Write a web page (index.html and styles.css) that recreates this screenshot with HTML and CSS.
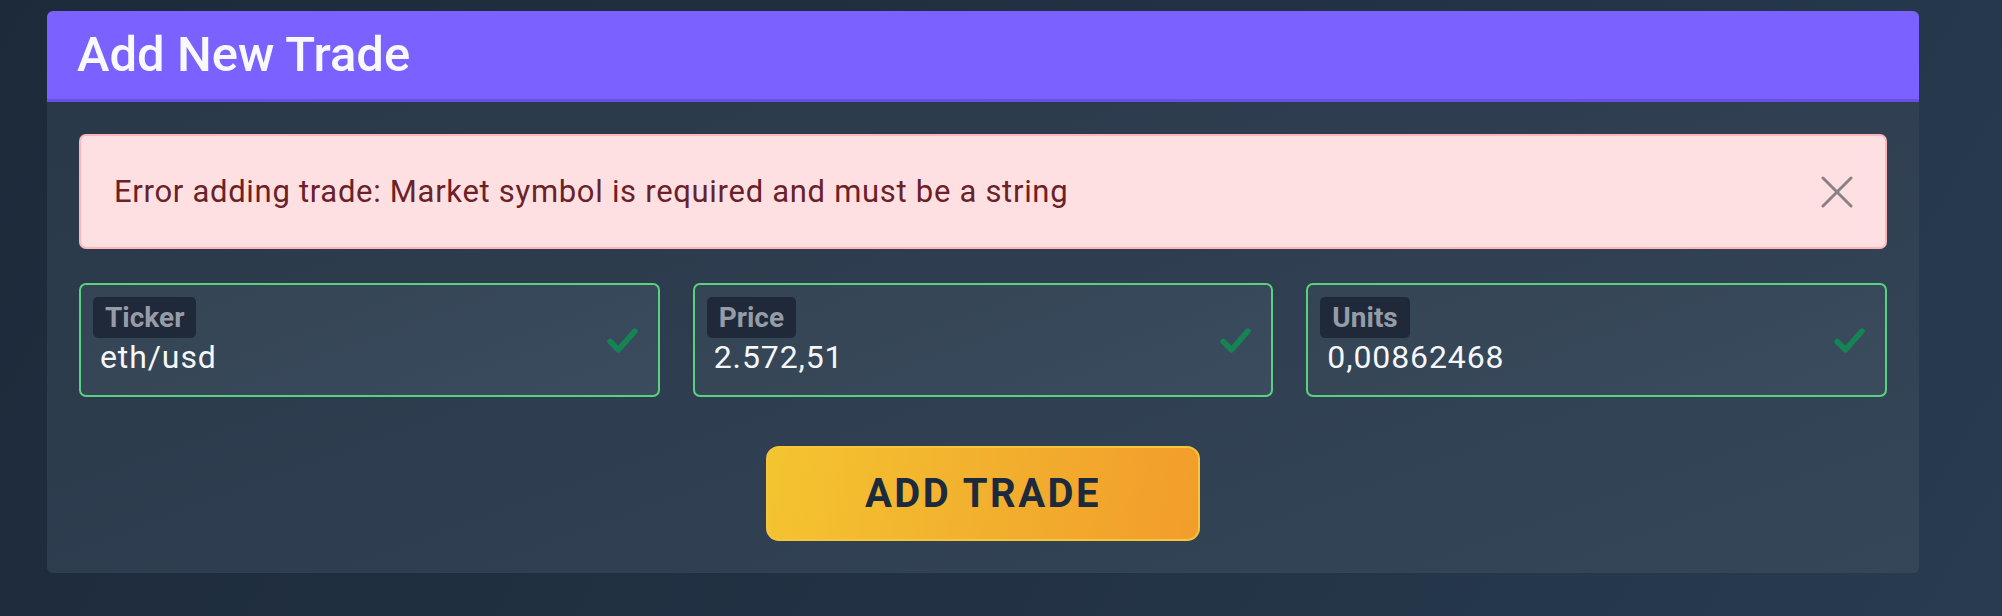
FILE: index.html
```html
<!DOCTYPE html>
<html lang="en">
<head>
<meta charset="utf-8">
<title>Add New Trade</title>
<link rel="stylesheet" href="styles.css">
</head>
<body>
<div class="page">
  <section class="card">
    <header class="card-header">
      <h2 class="card-title">Add New Trade</h2>
    </header>
    <div class="card-body">
      <div class="alert" role="alert">
        <span class="alert-text">Error adding trade: Market symbol is required and must be a string</span>
        <button class="alert-close" aria-label="Close">
          <svg viewBox="0 0 32 32" width="32" height="32"><path d="M2 2 L30 30 M30 2 L2 30" stroke="#8a8086" stroke-width="3" stroke-linecap="round" fill="none"/></svg>
        </button>
      </div>
      <div class="fields">
        <div class="field">
          <div class="field-main">
            <span class="field-label">Ticker</span>
            <span class="field-value">eth/usd</span>
          </div>
          <svg class="check" viewBox="0 0 34 34" width="35" height="35"><path d="M5 18 L13 26 L29 8" stroke="#168352" stroke-width="5.5" stroke-linecap="round" stroke-linejoin="round" fill="none"/></svg>
        </div>
        <div class="field">
          <div class="field-main">
            <span class="field-label">Price</span>
            <span class="field-value">2.572,51</span>
          </div>
          <svg class="check" viewBox="0 0 34 34" width="35" height="35"><path d="M5 18 L13 26 L29 8" stroke="#168352" stroke-width="5.5" stroke-linecap="round" stroke-linejoin="round" fill="none"/></svg>
        </div>
        <div class="field">
          <div class="field-main">
            <span class="field-label">Units</span>
            <span class="field-value">0,00862468</span>
          </div>
          <svg class="check" viewBox="0 0 34 34" width="35" height="35"><path d="M5 18 L13 26 L29 8" stroke="#168352" stroke-width="5.5" stroke-linecap="round" stroke-linejoin="round" fill="none"/></svg>
        </div>
      </div>
      <div class="actions">
        <button class="btn-add">ADD TRADE</button>
      </div>
    </div>
  </section>
</div>
</body>
</html>
```

FILE: styles.css
```css
html, body {
  margin: 0;
  padding: 0;
}
body {
  width: 2002px;
  height: 616px;
  overflow: hidden;
  background: linear-gradient(120deg, #1d2a3a 0%, #223244 55%, #283b4f 100%);
  font-family: Roboto, "Noto Sans", Arial, sans-serif;
}
.page {
  padding: 11px 83px 0 47px;
}
.card {
  border-radius: 6px;
  overflow: hidden;
  background: linear-gradient(160deg, #283848 0%, #2e3e50 50%, #344658 100%);
}
.card-header {
  background: #7b61ff;
  border-bottom: 3px solid #6a4fe6;
  height: 88px;
  padding: 0 30px;
}
.card-title {
  margin: 0;
  font-size: 49px;
  line-height: 88px;
  font-weight: 500;
  color: #f7f9fc;
}
.card-body {
  padding: 32px 32px 32px;
}
.alert {
  display: flex;
  align-items: center;
  justify-content: space-between;
  height: 111px;
  padding: 0 32px 0 33px;
  background: #ffe0e2;
  border: 2px solid #fdb7bb;
  border-radius: 7px;
}
.alert-text {
  font-size: 31px;
  color: #6a2228;
  letter-spacing: 0.7px;
}
.alert-close {
  display: flex;
  padding: 0;
  border: 0;
  background: transparent;
}
.fields {
  display: grid;
  grid-template-columns: repeat(3, 1fr);
  gap: 33px;
  margin-top: 34px;
}
.field {
  display: flex;
  align-items: center;
  justify-content: space-between;
  height: 110px;
  padding: 0 18px 0 12px;
  border: 2px solid #5ad27d;
  border-radius: 7px;
  background: linear-gradient(160deg, #344454 0%, #37485a 60%, #3b4c5e 100%);
}
.field-main {
  display: flex;
  flex-direction: column;
  align-items: flex-start;
  align-self: flex-start;
  padding-top: 12px;
}
.field-label {
  display: inline-block;
  height: 41px;
  padding: 0 12px;
  background: #1f2939;
  border-radius: 5px;
  font-size: 28px;
  line-height: 41px;
  font-weight: 700;
  color: #959ca8;
}
.field-value {
  padding-left: 7px;
  font-size: 32px;
  line-height: 38px;
  letter-spacing: 0.9px;
  color: #f5f7fa;
}
.check {
  display: block;
}
.actions {
  display: flex;
  justify-content: center;
  margin-top: 49px;
}
.btn-add {
  width: 434px;
  height: 95px;
  border: 2px solid #f6c53e;
  border-radius: 13px;
  background: linear-gradient(100deg, #f4c430 0%, #f2b02e 50%, #f29d2b 100%);
  font-family: Roboto, "Noto Sans", Arial, sans-serif;
  font-size: 40px;
  font-weight: 700;
  letter-spacing: 2.5px;
  color: #1c2a3e;
  padding: 0;
}
```
